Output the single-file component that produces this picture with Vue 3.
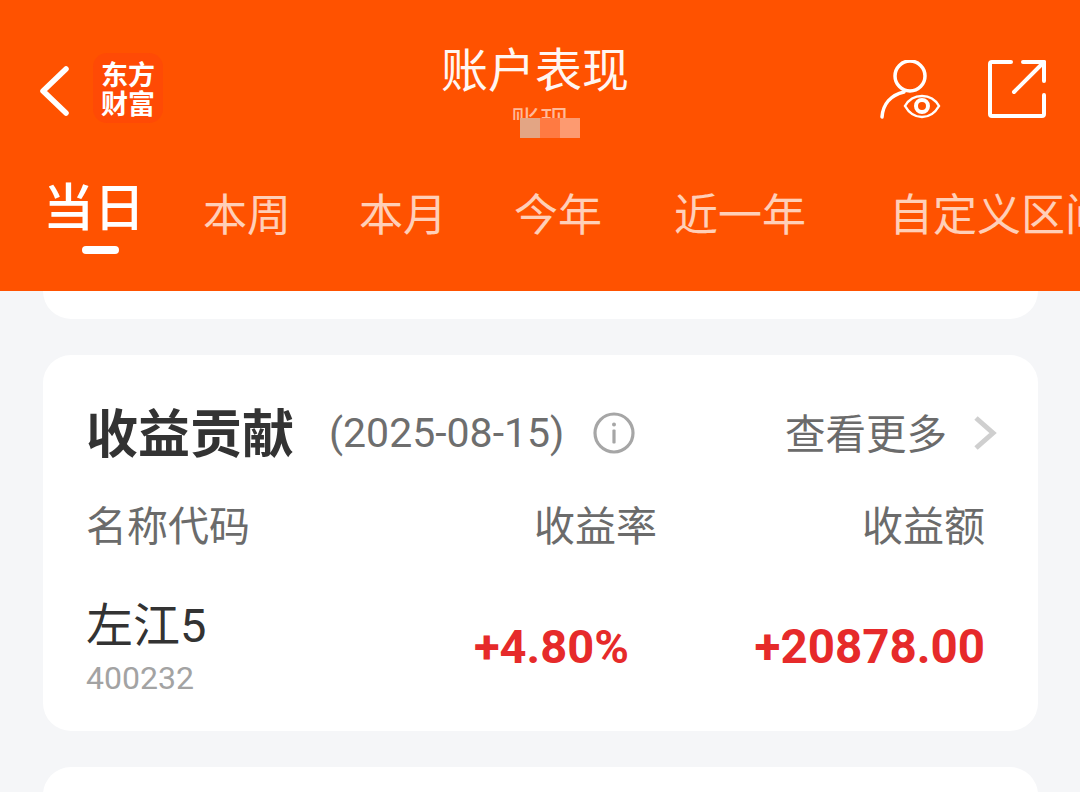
<template>
  <div class="page">
    <div class="header">
      <div class="topbar">
        <div class="left">
          <svg class="back" width="32" height="52" viewBox="0 0 32 52">
            <path d="M28 4 L5 26 L28 48" fill="none" stroke="#fff" stroke-width="5.5" stroke-linecap="round" stroke-linejoin="round" />
          </svg>
          <div class="logo"><span>东方</span><span>财富</span></div>
        </div>
        <div class="title-box">
          <div class="title">账户表现</div>
          <div class="sub">账现</div>
          <div class="mosaic"><i class="m1"></i><i class="m2"></i><i class="m3"></i></div>
        </div>
        <div class="right">
          <svg width="64" height="62" viewBox="0 0 64 62" fill="none" stroke="#fff" stroke-width="3.5" stroke-linecap="round">
            <circle cx="30" cy="16" r="15" />
            <path d="M2 57 C3 44 11 35 24 32" />
            <path d="M25 46 C29 39 35 36 42 36 C49 36 55 39 59 46 C55 53 49 57 42 57 C35 57 29 53 25 46 Z" stroke-width="2.5" />
            <circle cx="42" cy="46" r="6" stroke-width="4" />
          </svg>
          <svg class="share" width="60" height="60" viewBox="0 0 60 60" fill="none" stroke="#fff" stroke-width="4" stroke-linecap="round" stroke-linejoin="round">
            <path d="M24 3 H5 a2 2 0 0 0 -2 2 V55 a2 2 0 0 0 2 2 H55 a2 2 0 0 0 2 -2 V36" />
            <path d="M36 3 H57 V22" />
            <path d="M57 3 L27 33" />
          </svg>
        </div>
      </div>
      <div class="tabs">
        <div class="tab active">当日<b></b></div>
        <div class="tab t1">本周</div>
        <div class="tab t2">本月</div>
        <div class="tab t3">今年</div>
        <div class="tab t4">近一年</div>
        <div class="tab t5">自定义区间</div>
      </div>
    </div>

    <div class="body">
      <div class="card stub"></div>
      <div class="card main">
        <div class="head">
          <div class="head-title">收益贡献</div>
          <div class="date">(2025-08-15)</div>
          <svg class="info" width="42" height="42" viewBox="0 0 42 42">
            <circle cx="21" cy="21" r="19" fill="none" stroke="#a6a6a6" stroke-width="3.2" />
            <circle cx="21" cy="12.5" r="2" fill="#a6a6a6" />
            <rect x="19.4" y="17.5" width="3.2" height="14" rx="1" fill="#a6a6a6" />
          </svg>
          <div class="more">查看更多</div>
          <svg class="arrow" width="24" height="34" viewBox="0 0 24 34">
            <path d="M3 2 L20 17 L3 32" fill="none" stroke="#cfcfcf" stroke-width="5" />
          </svg>
        </div>
        <div class="cols">
          <div class="c-name">名称代码</div>
          <div class="c-rate">收益率</div>
          <div class="c-amt">收益额</div>
        </div>
        <div class="row">
          <div class="name-col">
            <div class="name">左江5</div>
            <div class="code">400232</div>
          </div>
          <div class="rate">+4.80%</div>
          <div class="amt">+20878.00</div>
        </div>
      </div>
      <div class="card next"></div>
    </div>
  </div>
</template>

<script setup>
</script>

<style>
html, body {
  margin: 0;
  background: #f5f6f8;
  overflow: hidden;
}
</style>

<style scoped>
.page {
  width: 1080px;
  height: 792px;
  overflow: hidden;
  background: #f5f6f8;
  font-family: "Roboto", "Noto Sans CJK SC", sans-serif;
}
.header {
  height: 291px;
  background: #ff5200;
  overflow: hidden;
}
.topbar {
  height: 118px;
  padding-top: 40px;
  display: flex;
  position: relative;
}
.left {
  display: flex;
  align-items: flex-start;
  padding-left: 38px;
  padding-top: 13px;
}
.back {
  margin-top: 12px;
}
.logo {
  width: 70px;
  height: 70px;
  margin-left: 23px;
  border-radius: 14px;
  background: #ff4a05;
  color: #fff;
  font-family: "Noto Sans CJK SC", serif;
  font-weight: 700;
  font-size: 27px;
  line-height: 29px;
  display: flex;
  flex-direction: column;
  align-items: center;
  justify-content: center;
}
.title-box {
  position: absolute;
  left: 0;
  right: 10px;
  top: 37px;
  text-align: center;
}
.title {
  color: #fff;
  font-size: 47px;
  line-height: 60px;
  font-family: "Noto Sans CJK SC", sans-serif;
  opacity: 0.95;
}
.sub {
  height: 16px;
  margin-top: 7px;
  padding-left: 10px;
  overflow: hidden;
  color: #fff;
  opacity: 0.6;
  font-size: 29px;
  line-height: 36px;
}
.mosaic {
  position: absolute;
  left: 520px;
  top: 81px;
  display: flex;
}
.mosaic i {
  display: block;
  width: 20px;
  height: 20px;
}
.m1 { background: #e3a584; }
.m2 { background: #ff7a42; }
.m3 { background: #fd9a70; }
.right {
  margin-left: auto;
  display: flex;
  align-items: flex-start;
  padding-right: 33px;
  padding-top: 20px;
}
.share {
  margin-left: 43px;
  margin-top: -1px;
}
.tabs {
  display: flex;
  white-space: nowrap;
  color: #fff;
  font-family: "Noto Sans CJK SC", sans-serif;
  align-items: flex-start;
}
.tab {
  font-size: 44px;
  line-height: 56px;
  margin-top: 26px;
  opacity: 0.72;
}
.tab.active {
  font-size: 51px;
  line-height: 62px;
  margin-top: 15px;
  margin-left: 43px;
  opacity: 1;
  font-weight: 500;
  position: relative;
}
.tab.active b {
  position: absolute;
  left: 39px;
  top: 73px;
  width: 37px;
  height: 8px;
  border-radius: 4px;
  background: #fff;
}
.t1 { margin-left: 58px; }
.t2 { margin-left: 68px; }
.t3 { margin-left: 67px; }
.t4 { margin-left: 72px; }
.t5 { margin-left: 83px; }
.body {
  padding: 0 42px 0 43px;
}
.card {
  background: #fff;
  border-radius: 28px;
}
.stub {
  height: 28px;
  border-radius: 0 0 28px 28px;
}
.main {
  height: 376px;
  margin-top: 36px;
  padding: 48px 53px 0 43px;
  box-sizing: border-box;
}
.next {
  height: 60px;
  margin-top: 36px;
}
.head {
  height: 60px;
  display: flex;
  align-items: center;
  margin-right: -12px;
}
.head-title {
  font-size: 52px;
  font-weight: 700;
  color: #333;
  font-family: "Noto Sans CJK SC", sans-serif;
  line-height: 60px;
  margin-top: -4px;
}
.date {
  font-size: 41px;
  color: #6e6e6e;
  margin-left: 35px;
}
.info {
  margin-left: 29px;
}
.more {
  margin-left: auto;
  margin-top: -4px;
  font-size: 40.5px;
  color: #6b6b6b;
  font-family: "Noto Sans CJK SC", sans-serif;
}
.arrow {
  margin-left: 26px;
}
.cols {
  display: flex;
  font-size: 41px;
  line-height: 54px;
  color: #6b6b6b;
  font-family: "Noto Sans CJK SC", sans-serif;
  margin-top: 33px;
}
.c-rate { margin-left: 284px; }
.c-amt { margin-left: auto; }
.row {
  display: flex;
  align-items: flex-start;
  margin-top: 46px;
}
.name {
  font-size: 47px;
  line-height: 60px;
  color: #333;
}
.code {
  font-size: 32px;
  line-height: 36px;
  color: #a3a3a3;
  margin-top: 4px;
}
.name-col {
  width: 388px;
}
.rate, .amt {
  font-size: 47.5px;
  line-height: 60px;
  font-weight: 700;
  color: #e62a2a;
  margin-top: 21px;
}
.rate {
  font-size: 47px;
}
.amt {
  margin-left: auto;
}
</style>
